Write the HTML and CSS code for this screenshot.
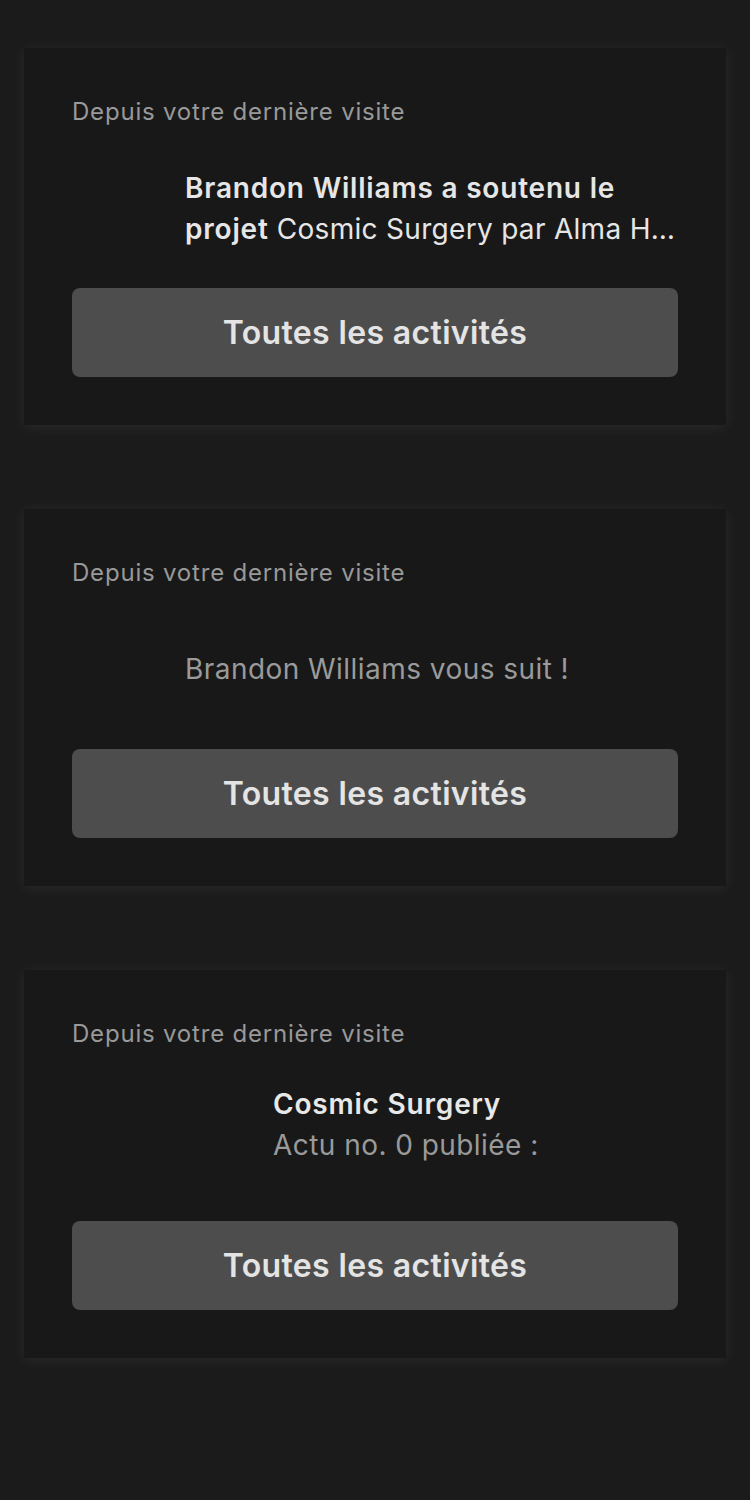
FILE: index.html
```html
<!DOCTYPE html>
<html lang="fr">
<head>
<meta charset="utf-8">
<link rel="stylesheet" href="styles.css">
</head>
<body>
<main class="feed">
  <section class="card">
    <p class="label">Depuis votre dernière visite</p>
    <div class="row">
      <div class="avatar"></div>
      <p class="msg clamp"><strong>Brandon Williams a soutenu le projet</strong> Cosmic Surgery par Alma H…</p>
    </div>
    <button class="btn">Toutes les activités</button>
  </section>

  <section class="card">
    <p class="label">Depuis votre dernière visite</p>
    <div class="row">
      <div class="avatar"></div>
      <p class="msg muted">Brandon Williams vous suit !</p>
    </div>
    <button class="btn">Toutes les activités</button>
  </section>

  <section class="card">
    <p class="label">Depuis votre dernière visite</p>
    <div class="row row-top">
      <div class="thumb"></div>
      <div class="msg">
        <p class="title">Cosmic Surgery</p>
        <p class="muted">Actu no. 0 publiée :</p>
      </div>
    </div>
    <button class="btn">Toutes les activités</button>
  </section>
</main>
</body>
</html>
```

FILE: styles.css
```css
* { box-sizing: border-box; }
html, body {
  margin: 0;
  padding: 0;
  background: #1b1b1b;
}
body {
  font-family: Inter, "Noto Sans", sans-serif;
  color: #e6e6e6;
  -webkit-font-smoothing: antialiased;
}
p { margin: 0; }
.feed {
  display: flex;
  flex-direction: column;
  gap: 84px;
  padding: 48px 24px;
}
.card {
  background: #181818;
  padding: 48px;
  box-shadow: 0 2px 14px rgba(255, 255, 255, 0.07);
  display: flex;
  flex-direction: column;
}
.label {
  font-size: 24px;
  line-height: 32px;
  color: #999999;
  letter-spacing: 0.8px;
}
.row {
  display: flex;
  align-items: center;
  gap: 24px;
  margin: 36px 0 35px;
  min-height: 89px;
}
.row-top { align-items: flex-start; margin-top: 34px; margin-bottom: 37px; }
.avatar {
  width: 89px;
  height: 89px;
  flex: none;
}
.thumb {
  width: 177px;
  height: 100px;
  flex: none;
}
.msg {
  font-size: 28px;
  line-height: 41px;
  color: #e6e6e6;
  flex: 1;
  min-width: 0;
  letter-spacing: 0.45px;
}
.msg strong { font-weight: 600; letter-spacing: 0.8px; }
.clamp {
  letter-spacing: 0.3px;
}
.muted { color: #9a9a9a; }
.title { font-weight: 600; color: #e8e8e8; letter-spacing: 0.8px; }
.btn {
  display: block;
  width: 100%;
  height: 89px;
  border: 0;
  border-radius: 8px;
  background: #4d4d4d;
  color: #e4e4e4;
  font-family: Inter, "Noto Sans", sans-serif;
  font-size: 32px;
  font-weight: 600;
  letter-spacing: 0.35px;
  padding: 0;
}
```
